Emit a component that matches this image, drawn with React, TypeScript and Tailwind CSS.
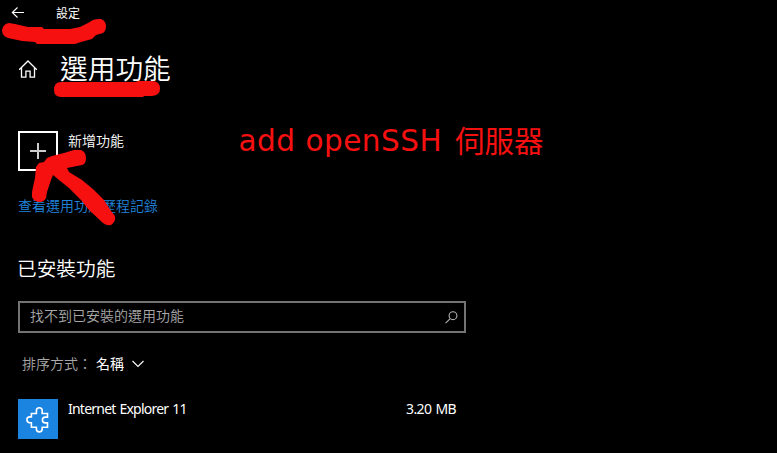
const cjk = "font-['Noto_Sans_CJK_TC',sans-serif]";
const latin = "font-['Noto_Sans','Noto_Sans_CJK_TC',sans-serif]";

function BackIcon() {
  return (
    <svg width="14" height="12" viewBox="0 0 14 12" fill="none" stroke="#fff" strokeWidth="1.1">
      <path d="M6.500.5 1.300 5.500 6.500 10.500M1.300 5.500H13" />
    </svg>
  );
}

function HomeIcon() {
  return (
    <svg width="20" height="18" viewBox="0 0 20 18" fill="none" stroke="#fff" strokeWidth="1.3">
      <path d="M1.200 9.700 10 1l8.800 8.700M3.500 8v9.200h4.400v-6h4.200v6h4.400V8" />
    </svg>
  );
}

function SearchIcon() {
  return (
    <svg width="13" height="13" viewBox="0 0 13 13" fill="none" stroke="#b0b0b0" strokeWidth="1.1">
      <circle cx="8" cy="4.700" r="3.900" />
      <path d="M5.200 7.600.6 12.200" />
    </svg>
  );
}

function PuzzleIcon() {
  return (
    <svg width="40" height="40" viewBox="0 0 40 40" fill="none" stroke="#fff" strokeWidth="1.600">
      <path d="M13.400 14.500h5v-2.800a2.900 2.900 0 0 1 5.800 0v2.800h5.300v3.600h-2.200a2.900 2.900 0 0 0 0 5.800h2.200v4.400h-5.300v1.700a2.900 2.900 0 0 1-5.800 0v-1.700h-5v-4.600h-1.600a2.900 2.900 0 0 1 0-5.800h1.600z" />
    </svg>
  );
}

function Annotations() {
  return (
    <div className="pointer-events-none absolute inset-0">
      <svg className="absolute inset-0" width="777" height="453" fill="#f61010">
        <path d="M9 23L15 24L28 27H42L44 29H70L80 27L88 23L93 20Q97 18.500 101 19Q106 21 106 26Q106 31 103 33L96 35L92 39L81 42L75 44H37L35 42L22 41L8 38Q2 36 2 30Q3 24 9 23Z" />
        <path d="M61 82H136L138 81H152Q160 81 160 89Q160 95 152 96H144L143 97H61Q54 97 54 90Q54 82 61 82Z" />
        <path d="M52 156L64 153L74 150H81Q86 152 86 158Q86 164 82 165L67 168L69 172L82 180L94 190L104 200L111 211L115 216Q116 222 111 225Q107 226 103 223L89 210L81 200L69 188L59 180L53 175L51 180L47 192L46 198Q44 202 40 202Q34 202 32 197V192L33 187L35 178L36 167L39 163L44 162L47 158Z" />
      </svg>
      <span className="absolute left-[238.500px] top-[120px] whitespace-nowrap text-[29.500px] leading-[42px] tracking-[0.500px] text-[#f61010] font-['DejaVu_Sans',sans-serif]">
        add openSSH
      </span>
      <span className={`absolute left-[455px] top-[118px] whitespace-nowrap text-[29.500px] leading-[42px] text-[#f61010] ${cjk}`}>
        伺服器
      </span>
    </div>
  );
}

export default function App() {
  return (
    <div className={`relative h-[453px] w-[777px] overflow-hidden bg-black text-white ${cjk}`}>
      <header className="flex h-[26px] items-center gap-[31px] pl-[11px]">
        <BackIcon />
        <span className="text-[12px] leading-4">設定</span>
      </header>
      <div className="flex h-[86px] items-center gap-[22px] pl-[18px]">
        <HomeIcon />
        <h1 className="pb-[4px] text-[27.700px] font-[350] leading-10">選用功能</h1>
      </div>
      <main className="pl-[18px]">
        <button className="mt-[19px] flex gap-[10px] text-left">
          <span className="flex size-10 items-center justify-center border-2 border-white">
            <svg width="16" height="16" viewBox="0 0 16 16" stroke="#ccc" strokeWidth="2">
              <path d="M8 0v16M0 8h16" />
            </svg>
          </span>
          <span className="-mt-px text-[14px] font-[350] leading-5">新增功能</span>
        </button>
        <a className="mt-[24px] block text-[14px] font-[350] leading-5 text-[#2084dc]">查看選用功能歷程記錄</a>
        <h2 className="-ml-px mt-[38px] text-[19.700px] font-[350] leading-[30px]">已安裝功能</h2>
        <div className="mt-[18px] flex h-8 w-[448px] items-center justify-between border-2 border-[#737373] pl-[10px] pr-[6px]">
          <span className="pb-[4px] text-[14px] font-[350] leading-5 text-[#a8a8a8]">找不到已安裝的選用功能</span>
          <SearchIcon />
        </div>
        <div className="mt-[20px] flex items-center pl-[4px] text-[14px] leading-5">
          <span className="w-[74px] font-[350] text-[#a8a8a8]">排序方式：</span>
          <span>名稱</span>
          <svg className="ml-[8px] mt-[2px]" width="12" height="8" viewBox="0 0 12 8" fill="none" stroke="#fff" strokeWidth="1.100">
            <path d="m.5 1 5.500 5.500L11.500 1" />
          </svg>
        </div>
        <div className={`mt-[26px] flex h-10 w-[448px] ${latin}`}>
          <div className="size-10 bg-[#1b84e0]">
            <PuzzleIcon />
          </div>
          <span className="ml-[10px] w-[338px] text-[14px] leading-5 tracking-[-0.770px] [word-spacing:1px]">Internet Explorer 11</span>
          <span className="text-[14px] leading-5 tracking-[-0.600px] [word-spacing:1px]">3.20 MB</span>
        </div>
      </main>
      <Annotations />
    </div>
  );
}
